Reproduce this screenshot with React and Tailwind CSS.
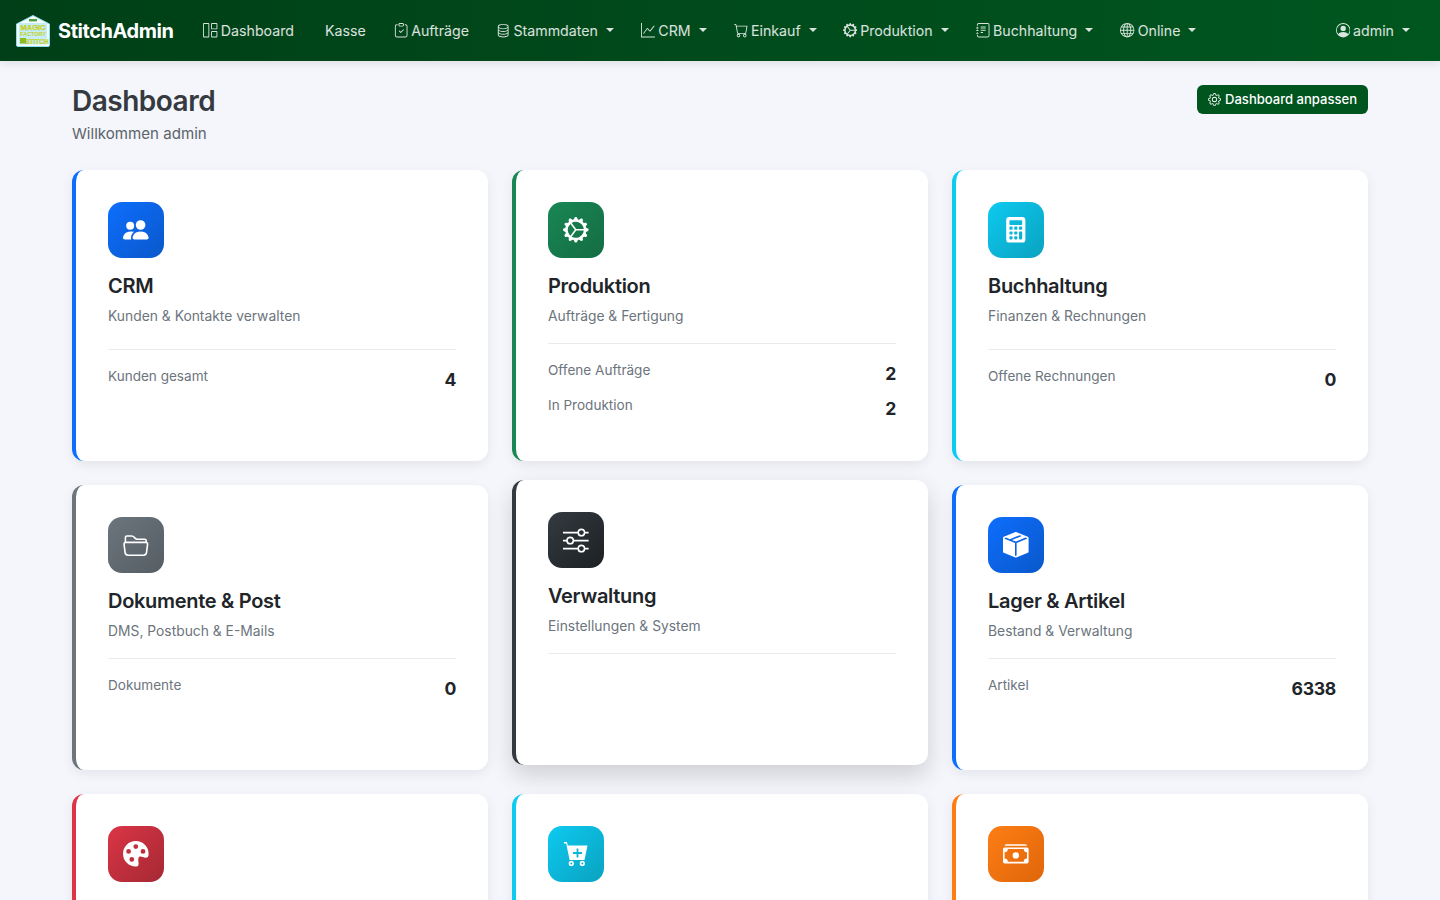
import {
    BsGrid1X2,
    BsClipboardCheck,
    BsDatabase,
    BsGraphUp,
    BsCart,
    BsGearWideConnected,
    BsJournalText,
    BsGlobe,
    BsPersonCircle,
    BsGear,
    BsPeopleFill,
    BsCalculatorFill,
    BsFolder2Open,
    BsSliders,
    BsBoxSeamFill,
    BsPaletteFill,
    BsCashStack,
} from "react-icons/bs";

const navItems = [
    { label: "Dashboard", icon: BsGrid1X2, className: "ml-[30px]" },
    { label: "Kasse", className: "ml-[31px]" },
    { label: "Aufträge", icon: BsClipboardCheck, className: "ml-[28px]" },
    { label: "Stammdaten", icon: BsDatabase, caret: true, className: "ml-[27px]" },
    { label: "CRM", icon: BsGraphUp, caret: true, className: "ml-[27px]" },
    { label: "Einkauf", icon: BsCart, caret: true, className: "ml-[27px]" },
    { label: "Produktion", icon: BsGearWideConnected, caret: true, className: "ml-[26px]" },
    { label: "Buchhaltung", icon: BsJournalText, caret: true, className: "ml-[27px]" },
    { label: "Online", icon: BsGlobe, caret: true, className: "ml-[27px]" },
];

const cards = [
    {
        title: "CRM",
        sub: "Kunden & Kontakte verwalten",
        icon: BsPeopleFill,
        border: "border-l-[#0d6efd]",
        bg: "from-[#0d6efd] to-[#0a58ca]",
        stats: [["Kunden gesamt", "4"]],
    },
    {
        title: "Produktion",
        sub: "Aufträge & Fertigung",
        icon: BsGearWideConnected,
        border: "border-l-[#198754]",
        bg: "from-[#198754] to-[#146c43]",
        stats: [
            ["Offene Aufträge", "2"],
            ["In Produktion", "2"],
        ],
    },
    {
        title: "Buchhaltung",
        sub: "Finanzen & Rechnungen",
        icon: BsCalculatorFill,
        border: "border-l-[#0dcaf0]",
        bg: "from-[#0dcaf0] to-[#0aa2c0]",
        stats: [["Offene Rechnungen", "0"]],
    },
    {
        title: "Dokumente & Post",
        sub: "DMS, Postbuch & E-Mails",
        icon: BsFolder2Open,
        border: "border-l-[#6c757d]",
        bg: "from-[#6c757d] to-[#565e64]",
        stats: [["Dokumente", "0"]],
    },
    {
        title: "Verwaltung",
        sub: "Einstellungen & System",
        icon: BsSliders,
        border: "border-l-[#343a40]",
        bg: "from-[#343a40] to-[#1d2124]",
        stats: [],
        hovered: true,
    },
    {
        title: "Lager & Artikel",
        sub: "Bestand & Verwaltung",
        icon: BsBoxSeamFill,
        border: "border-l-[#0d6efd]",
        bg: "from-[#0d6efd] to-[#0a58ca]",
        stats: [["Artikel", "6338"]],
    },
];

// Cart with ring wheels, the package icons have filled ones
const CartIcon = ({ className }) => (
    <svg viewBox="0 0 24 24" width="24" height="24" className={className}>
        <path
            fill="currentColor"
            fillRule="evenodd"
            d="M0 0h3l.7 3.4H23.5l-3 14.6H5.6L2.2 1.6H0z M12.6 6.5v3.6H9v1.8h3.6v3.6h1.8v-3.6H18v-1.8h-3.6V6.5z M7.3 18.8a2.6 2.6 0 1 1 0 5.2a2.6 2.6 0 0 1 0-5.2z M7.3 20.4a1 1 0 1 0 0 2a1 1 0 0 0 0-2z M18.3 18.8a2.6 2.6 0 1 1 0 5.2a2.6 2.6 0 0 1 0-5.2z M18.3 20.4a1 1 0 1 0 0 2a1 1 0 0 0 0-2z"
        />
    </svg>
);

// only the icons of the last row are inside the window
const lastRow = [
    { icon: BsPaletteFill, border: "border-l-[#dc3545]", bg: "from-[#dc3545] to-[#a52834]" },
    { icon: CartIcon, border: "border-l-[#0dcaf0]", bg: "from-[#0dcaf0] to-[#0aa2c0]" },
    { icon: BsCashStack, border: "border-l-[#fd7e14]", bg: "from-[#fd7e14] to-[#e0660a]" },
];

const Logo = () => (
    <svg width="34" height="32" viewBox="0 0 34 32" className="shrink-0">
        <path d="M17 0.5 L33.5 9 V30 Q33.5 31.5 32 31.5 H2 Q0.5 31.5 0.5 30 V9 Z" fill="#f6fcfd" stroke="#8fdcf0" strokeWidth="1" />
        <rect x="13" y="4" width="8" height="2.4" fill="#4a9f3c" />
        <rect x="3" y="8" width="28" height="21.5" fill="#c6ecf4" />
        <g fontFamily="Liberation Sans, sans-serif" fontWeight="700" textAnchor="middle">
            <text x="17" y="15" fontSize="7.5" fill="#eef01a" stroke="#8aa51f" strokeWidth="0.25">MAGIC</text>
            <text x="17" y="21" fontSize="5.4" fill="#c4d21f">FACTORY</text>
            <text x="21" y="28.5" fontSize="6.5" fill="#e2e81f" stroke="#8aa51f" strokeWidth="0.2">STITCH</text>
        </g>
        <rect x="4" y="23" width="6" height="5.5" fill="#8dbb24" />
    </svg>
);

const NavItem = ({ label, icon: Icon, caret, className }) => (
    <a className={`flex items-center text-[14.2px] text-white/85 ${className}`}>
        {Icon && <Icon className="mr-[3px] text-[14.4px]" />}
        {label}
        {caret && (
            <span className="ml-[8px] border-x-[4.3px] border-t-[4.3px] border-x-transparent border-t-white/85" />
        )}
    </a>
);

const IconBox = ({ icon: Icon, bg }) => (
    <div className={`flex h-14 w-14 items-center justify-center rounded-[14px] bg-linear-to-br text-white ${bg}`}>
        <Icon className="text-[25.6px]" />
    </div>
);

const Card = ({ title, sub, icon, border, bg, stats, hovered }) => (
    <div
        className={`flex flex-col rounded-xl border-l-4 bg-white p-8 ${border} ${
            hovered
                ? "-translate-y-[5px] shadow-[0_10px_25px_rgba(0,0,0,0.16)]"
                : "shadow-[0_4px_12px_rgba(0,0,0,0.07)]"
        }`}
    >
        <IconBox icon={icon} bg={bg} />
        <h3 className="mt-[13px] text-[20px] leading-[30px] font-semibold tracking-[-0.3px] text-[#212529]">
            {title}
        </h3>
        <p className="mt-[5px] mb-[16px] text-[13.85px] leading-[21px] text-[#6c757d]">{sub}</p>
        <div className="mt-auto min-h-[80px] border-t border-[#e9ecef] pt-[14px] pb-[1px]">
            {stats.map(([label, value]) => (
                <div key={label} className="mb-[4px] flex justify-between">
                    <span className="text-[13.55px] leading-[24px] text-[#6c757d]">{label}</span>
                    <span className="mt-[1px] text-[17.6px] leading-[30px] font-bold tracking-[-0.3px] text-[#212529]">
                        {value}
                    </span>
                </div>
            ))}
        </div>
    </div>
);

const App = () => {
    return (
        <div className="h-screen overflow-hidden bg-[#f4f6fb] font-['Inter',sans-serif]">
            <nav className="flex h-[61px] items-center bg-linear-to-r from-[#003f17] to-[#00561f] pr-[30px] pl-[16px] shadow-[0_2px_10px_rgba(0,0,0,0.1)]">
                <Logo />
                <span className="ml-[8px] text-[20px] font-bold tracking-[-0.45px] text-white">StitchAdmin</span>
                {navItems.map((item) => (
                    <NavItem key={item.label} {...item} />
                ))}
                <NavItem label="admin" icon={BsPersonCircle} caret className="ml-auto" />
            </nav>

            <main className="mx-auto w-[1296px]">
                <div className="flex items-start justify-between pt-[24px]">
                    <div>
                        <h1 className="text-[28px] leading-[32px] font-semibold tracking-[-0.5px] text-[#343a40]">
                            Dashboard
                        </h1>
                        <p className="mt-[5px] text-[15.1px] leading-[24px] text-[#5c636a]">Willkommen admin</p>
                    </div>
                    <button className="flex h-[29px] items-center gap-[4px] rounded-md bg-[#00541e] px-[11px] text-[13.05px] font-medium text-white">
                        <BsGear className="text-[13px]" />
                        Dashboard anpassen
                    </button>
                </div>

                <div className="mt-[24px] grid grid-cols-3 gap-6">
                    {cards.map((card) => (
                        <Card key={card.title} {...card} />
                    ))}
                    {lastRow.map((card) => (
                        <div
                            key={card.border}
                            className={`h-[285px] rounded-xl border-l-4 bg-white p-8 shadow-[0_4px_12px_rgba(0,0,0,0.07)] ${card.border}`}
                        >
                            <IconBox icon={card.icon} bg={card.bg} />
                        </div>
                    ))}
                </div>
            </main>
        </div>
    );
};

export default App;
